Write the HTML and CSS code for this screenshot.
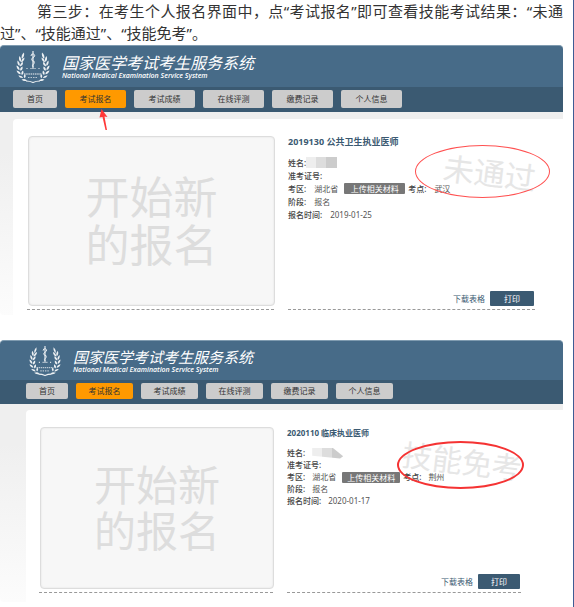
FILE: index.html
```
<!DOCTYPE html>
<html lang="zh-CN">
<head>
    <meta charset="UTF-8">
    <meta name="viewport" content="width=device-width, initial-scale=1.0">
    <title>国家医学考试考生服务系统</title>
    <link rel="stylesheet" href="styles.css">
</head>
<body>
    <!-- Shared emblem: laurel wreath with staff -->
    <svg class="defs" width="0" height="0" aria-hidden="true">
        <symbol id="emblem" viewBox="0 0 34 34">
            <g id="laurel" fill="currentColor">
                <path d="M8 2.500Q4.500 5.500 6 9Q8.800 6 8 2.500Z"/>
                <path d="M3.500 6Q2 9.500 4.500 12Q6 9 3.500 6Z"/>
                <path d="M8.500 7.500Q5 9 5 12.500Q8.500 11 8.500 7.500Z"/>
                <path d="M1.500 10.500Q.8 14 3.500 16Q4.600 13 1.500 10.500Z"/>
                <path d="M7 12Q3.700 13.500 4 16.500Q7.300 15.500 7 12Z"/>
                <path d="M.5 15.500Q.5 19 3.500 20.200Q4 17 .5 15.500Z"/>
                <path d="M6.500 16.500Q3.500 18 4.300 20.800Q7.300 19.800 6.500 16.500Z"/>
                <path d="M.5 20.500Q1.500 24 4.700 24.300Q4.300 21 .5 20.500Z"/>
                <path d="M7 20.500Q4.400 22.500 5.800 25Q8.400 23.500 7 20.500Z"/>
                <path d="M2.300 25.500Q4 28.500 7.200 28Q6 25 2.300 25.500Z"/>
                <path d="M9 24Q6.700 26 8.600 28.200Q10.600 26.500 9 24Z"/>
                <path d="M5.500 29.500Q8 32 11 30.500Q9.200 28 5.500 29.500Z"/>
            </g>
            <use href="#laurel" transform="translate(34 0) scale(-1 1)"/>
            <g fill="none" stroke="currentColor">
                <path d="M17 1V19" stroke-width="1.200"/>
                <path d="M15 6Q15 3.500 17.500 4Q20 5 18 7Q14.500 8.500 16 10.500Q19.500 11 18 13.500Q15.500 15 17 17"/>
                <path d="M10.500 18.500H24" stroke-dasharray="1 3" stroke-width="1.200"/>
                <path d="M8 24H26" stroke-dasharray="1.500 .7" stroke-width="1.500" opacity=".7"/>
                <path d="M12 27.500H22" stroke-dasharray="1.500 1" stroke-width="1.200" opacity=".7"/>
                <path d="M10 31Q14 31 17 32.500Q20 31 24 31" stroke-width="1.200"/>
            </g>
        </symbol>
    </svg>

    <main class="article">
        <p class="intro">第三步：在考生个人报名界面中，点“考试报名”即可查看技能考试结果：“未通过”、“技能通过”、“技能免考”。</p>

        <section class="portal portal-wide">
            <header class="banner">
                <svg class="emblem" aria-hidden="true"><use href="#emblem"/></svg>
                <div class="brand">
                    <h1 class="brand-name">国家医学考试考生服务系统</h1>
                    <p class="brand-sub">National Medical Examination Service System</p>
                </div>
            </header>
            <nav class="menu">
                <a class="menu-item menu-home" href="#">首页</a>
                <a class="menu-item active" href="#">考试报名
                    <svg class="arrow" viewBox="0 0 10 22" aria-hidden="true"><path d="M2.500 0L8.500 8L5.500 7.500L8 21L6.500 21L3.500 8L.5 8.500Z" fill="#ff3838"/></svg>
                </a>
                <a class="menu-item" href="#">考试成绩</a>
                <a class="menu-item" href="#">在线评测</a>
                <a class="menu-item" href="#">缴费记录</a>
                <a class="menu-item" href="#">个人信息</a>
            </nav>
            <div class="content">
                <div class="panel">
                    <div class="column">
                        <a class="start" href="#">开始新<br>的报名</a>
                    </div>
                    <div class="column record">
                        <h2 class="record-title">2019130 公共卫生执业医师</h2>
                        <p class="row"><b>姓名:</b><span class="mask"></span></p>
                        <p class="row"><b>准考证号:</b></p>
                        <p class="row"><b>考区:</b><span class="value">湖北省</span><button class="upload" type="button">上传相关材料</button><b>考点:</b><span class="value">武汉</span></p>
                        <p class="row"><b>阶段:</b><span class="value">报名</span></p>
                        <p class="row"><b>报名时间:</b><span class="value">2019-01-25</span></p>
                        <div class="actions">
                            <a class="download" href="#">下载表格</a>
                            <button class="print" type="button">打印</button>
                        </div>
                        <span class="stamp">未通过</span>
                        <span class="ring"></span>
                    </div>
                </div>
            </div>
        </section>

        <section class="portal portal-narrow">
            <header class="banner">
                <svg class="emblem" aria-hidden="true"><use href="#emblem"/></svg>
                <div class="brand">
                    <h1 class="brand-name">国家医学考试考生服务系统</h1>
                    <p class="brand-sub">National Medical Examination Service System</p>
                </div>
            </header>
            <nav class="menu">
                <a class="menu-item menu-home" href="#">首页</a>
                <a class="menu-item active" href="#">考试报名</a>
                <a class="menu-item" href="#">考试成绩</a>
                <a class="menu-item" href="#">在线评测</a>
                <a class="menu-item" href="#">缴费记录</a>
                <a class="menu-item" href="#">个人信息</a>
            </nav>
            <div class="content">
                <div class="panel">
                    <div class="column">
                        <a class="start" href="#">开始新<br>的报名</a>
                    </div>
                    <div class="column record">
                        <h2 class="record-title">2020110 临床执业医师</h2>
                        <p class="row"><b>姓名:</b><span class="mask"></span></p>
                        <p class="row"><b>准考证号:</b></p>
                        <p class="row"><b>考区:</b><span class="value">湖北省</span><button class="upload" type="button">上传相关材料</button><b>考点:</b><span class="value">荆州</span></p>
                        <p class="row"><b>阶段:</b><span class="value">报名</span></p>
                        <p class="row"><b>报名时间:</b><span class="value">2020-01-17</span></p>
                        <div class="actions">
                            <a class="download" href="#">下载表格</a>
                            <button class="print" type="button">打印</button>
                        </div>
                        <span class="stamp">技能免考</span>
                        <span class="ring"></span>
                    </div>
                </div>
            </div>
        </section>
    </main>
</body>
</html>
```
FILE: styles.css
```
* {
    box-sizing: border-box;
}
body {
    margin: 0;
    background-color: #ffffff;
    color: #444444;
    font-family: "Noto Sans", "Noto Sans CJK SC", sans-serif;
    font-size: 8px;
}
h1, h2, p {
    margin: 0;
}
a {
    text-decoration: none;
}
button {
    border: 0;
    padding: 0;
    font-family: inherit;
    color: #ffffff;
    cursor: pointer;
}
.defs {
    position: absolute;
}
.article {
    min-height: 100vh;
    padding-right: 10px;
    border-right: 1px solid #3f5c94;
}
.intro {
    font-size: 15px;
    line-height: 22px;
    text-indent: 37px;
    text-align: justify;
    color: #333333;
}

/* Sizes of the two screens */
.portal-wide {
    --edge: 13px;
    --banner: 42px;
    --menu: 25px;
    --item: 18px;
    --item-width: 61px;
    --home-width: 44px;
    --emblem: 34px;
    --name: 16px;
    --title: 9px;
    --row: 13px;
    --upload: 61px;
    --print: 44px;
    --box: 170px;
    --start: 44px;
    --start-line: 48px;
    margin-top: 1px;
}
.portal-narrow {
    --edge: 26px;
    --banner: 40px;
    --menu: 24px;
    --item: 16px;
    --item-width: 57px;
    --home-width: 42px;
    --emblem: 32px;
    --name: 15px;
    --title: 8px;
    --row: 12px;
    --upload: 58px;
    --print: 42px;
    --box: 162px;
    --start: 42px;
    --start-line: 46px;
    margin-top: 25px;
}

/* Banner */
.banner {
    display: flex;
    align-items: center;
    gap: 12px;
    height: var(--banner);
    padding-left: calc(var(--edge) + 3px);
    border-top: 1px solid #7f9bb0;
    border-radius: 4px 4px 0 0;
    background-color: #476b88;
    color: #ffffff;
}
.emblem {
    width: var(--emblem);
    height: var(--emblem);
    opacity: 0.9;
}
.brand-name {
    font-size: var(--name);
    font-weight: 400;
    font-style: italic;
    line-height: 18px;
}
.brand-sub {
    font-family: "Open Sans", "Noto Sans", sans-serif;
    font-size: 7px;
    font-weight: 600;
    font-style: italic;
    line-height: 8px;
}

/* Menu */
.menu {
    display: flex;
    gap: 8px;
    align-items: flex-start;
    height: var(--menu);
    padding: 3px 0 0 var(--edge);
    background-color: #3b5a72;
}
.menu-item {
    position: relative;
    width: var(--item-width);
    height: var(--item);
    border-radius: 2px;
    background-color: #cccccc;
    color: #333333;
    line-height: var(--item);
    text-align: center;
}
.menu-home {
    width: var(--home-width);
}
.menu-item.active {
    background-color: #ff9900;
}
.arrow {
    position: absolute;
    left: 34px;
    top: 19px;
    width: 10px;
    height: 22px;
    z-index: 2;
}

/* Content */
.content {
    padding: 7px 0 0 var(--edge);
    border-bottom-left-radius: 4px;
    background: linear-gradient(#efefef, #efefef 20%, #fcfcfc);
}
.panel {
    display: flex;
    gap: 14px;
    padding: 17px 28px 5px 14px;
    border-top-left-radius: 4px;
    background-color: #ffffff;
}
.portal-narrow .content {
    padding-top: 6px;
}
.portal-narrow .panel {
    padding: 17px 42px 9px 13px;
}
.column {
    flex: 1;
    min-width: 0;
    padding-bottom: 3px;
    border-bottom: 1px dashed #999999;
}
.start {
    display: flex;
    align-items: center;
    justify-content: center;
    height: var(--box);
    margin: 0 -1px 0 1px;
    border: 1px solid #dddddd;
    border-radius: 4px;
    box-shadow: inset 0 0 2px #dddddd;
    background-color: #f7f7f7;
    color: #dddddd;
    font-size: var(--start);
    line-height: var(--start-line);
}

/* Record */
.record {
    position: relative;
    display: flex;
    flex-direction: column;
}
.record-title {
    margin-bottom: 8px;
    color: #3b5a72;
    font-size: var(--title);
    font-weight: 700;
    line-height: 12px;
}
.row {
    position: relative;
    z-index: 1;
    display: flex;
    align-items: center;
    height: var(--row);
    line-height: var(--row);
    white-space: nowrap;
}
.row b {
    font-weight: 500;
}
.value {
    margin-left: 8px;
    color: #555555;
}
.mask {
    width: 31px;
    height: 11px;
    background: linear-gradient(90deg, #eeeeee 10px, #dddddd 10px, #dddddd 20px, #cccccc 20px);
}
.portal-narrow .value {
    margin-left: 7px;
}
.portal-narrow .mask {
    margin-left: 7px;
    clip-path: polygon(0 0, 65% 0, 100% 80%, 90% 100%, 0 75%);
}
.upload {
    width: var(--upload);
    height: 11px;
    margin: 0 3px 0 6px;
    border-radius: 1px;
    background-color: #777777;
    font-size: 8px;
    line-height: 11px;
}
.actions {
    display: flex;
    align-items: center;
    justify-content: flex-end;
    gap: 5px;
    margin-top: auto;
    padding-right: 1px;
}
.download {
    color: #3b5a72;
}
.print {
    width: var(--print);
    height: 15px;
    border-radius: 1px;
    background-color: #3b5a72;
    font-size: 8px;
    line-height: 15px;
}

/* Result stamp and the red ring over it */
.stamp {
    position: absolute;
    top: 17px;
    left: 155px;
    color: #e6e6e6;
    font-size: 31px;
    line-height: 40px;
    white-space: nowrap;
    transform: rotate(7deg);
}
.ring {
    position: absolute;
    top: 9px;
    left: 127px;
    width: 135px;
    height: 53px;
    border: 1px solid #ff5050;
    border-radius: 50%;
    z-index: 2;
}
.portal-narrow .stamp {
    top: 15px;
    left: 115px;
    font-size: 30px;
}
.portal-narrow .ring {
    top: 14px;
    left: 110px;
    width: 127px;
    height: 48px;
    border: 2px solid #f53333;
}
```
